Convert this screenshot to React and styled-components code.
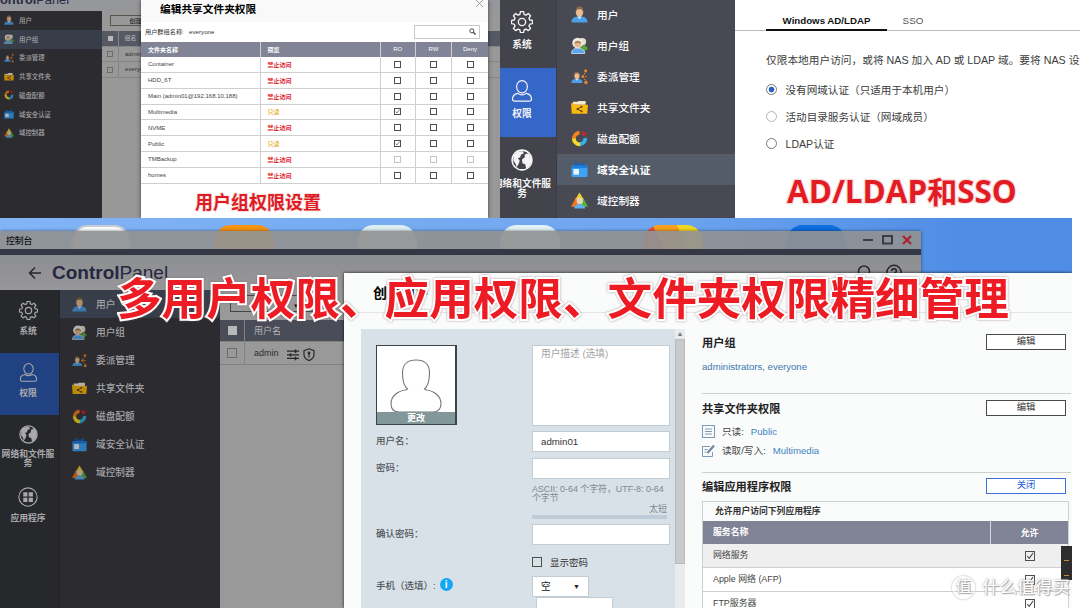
import React from 'react'
import styled, { createGlobalStyle, css } from 'styled-components'

const GlobalStyle = createGlobalStyle`
  *{
    box-sizing: border-box;
  }

  body{
    margin: 0;
    background: #fff;
    font-family: "Liberation Sans", "Noto Sans CJK SC", sans-serif;
  }
`

/* ---------- icons ---------- */

const Person = ({ x = 0, y = 0, s = 1 }) => (
  <g transform={`translate(${x} ${y}) scale(${s})`}>
    <path d="M.5 17.500c0-4 2.600-6 6.100-6.400h4.800c3.500.4 6.100 2.400 6.100 6.400z" fill="#4f9fe6" />
    <path d="M6.600 11l2.400 3.400 2.400-3.400z" fill="#d8ecfb" />
    <ellipse cx="9" cy="6.600" rx="3.900" ry="5" fill="#e9bd93" />
    <path d="M5 6.400C4.600 2.600 6.400.5 9 .5s4.400 2.100 4 5.900c-.8-2.400-2-3-4-3s-3.200.6-4 3z" fill="#8a6b4e" />
  </g>
)

const UserIcon = () => <svg viewBox="0 0 18 18"><Person /></svg>

const GroupIcon = () => (
  <svg viewBox="0 0 18 18">
    <circle cx="12" cy="5" r="4" fill="#e8dccb" />
    <path d="M10 12l4-4 4 4-4 4z" fill="#5aa83c" />
    <circle cx="7" cy="6.300" r="5.600" fill="#f1efe9" />
    <circle cx="7.200" cy="7.400" r="3.600" fill="#e6b78b" />
    <path d="M3.600 6.800C4 3.600 10.500 3.600 10.800 6.800 9 5.800 6 5.600 3.600 6.800z" fill="#8f7355" />
    <path d="M.5 17.500c0-4 3-5.500 6.600-5.500s7.400 1.500 7.400 5.500z" fill="#5aa6ea" stroke="#dcebf8" strokeWidth=".8" />
  </svg>
)

const DelegateIcon = () => (
  <svg viewBox="0 0 18 18">
    <Person x={0} y={3.500} s={0.7} />
    <path d="M12 9l4-5M12 9h4.500M12 9l4 5" stroke="#e8862a" strokeWidth="1.100" strokeDasharray="1.800 1" fill="none" />
    <circle cx="15.500" cy="3" r="1.600" fill="#e8862a" />
    <circle cx="12.500" cy="9" r="1.400" fill="#e8862a" />
    <circle cx="15.800" cy="15.300" r="1.800" fill="#e8862a" />
  </svg>
)

const FolderIcon = () => (
  <svg viewBox="0 0 18 18">
    <path d="M2 3h5l1-1h7.500v4H2z" fill="#f3ead0" />
    <path d="M0 4.500h2.500l1 1.500H18l-.8 9.500H.8z" fill="#fbb80f" />
    <path d="M11 8.200L7 10.700l4 2.400" stroke="#5b4308" strokeWidth="1" fill="none" />
    <circle cx="7" cy="10.700" r="1.200" fill="#5b4308" />
    <circle cx="11.200" cy="8.200" r="1.100" fill="#5b4308" />
    <circle cx="11.200" cy="13.100" r="1.100" fill="#5b4308" />
  </svg>
)

const QuotaIcon = () => (
  <svg viewBox="0 0 18 18" fill="none" strokeWidth="4">
    <path d="M9 3A6 6 0 0 0 3 9.500" stroke="#f5821f" />
    <path d="M3 9A6 6 0 0 0 10 15" stroke="#f6dc2b" />
    <path d="M9.500 15A6 6 0 0 0 15 8.500" stroke="#36b0e6" />
    <path d="M11 1.500l1.500 5 4.500-2c-1.500-2.500-4-3-6-3z" fill="#c9252d" />
  </svg>
)

const DomainIcon = () => (
  <svg viewBox="0 0 18 18">
    <path d="M4 .5l5 3.500 5-3.500v5H4z" fill="#1463b8" />
    <rect x=".5" y="5" width="17" height="12" rx="1" fill="#3ea2f5" />
    <path d="M.5 5h17v2.500H.5z" fill="#1c7fdc" />
    <rect x="2.600" y="8.500" width="5.800" height="6" fill="#eaf4fd" />
  </svg>
)

const ControllerIcon = () => (
  <svg viewBox="0 0 18 18">
    <path d="M5 6l5.200 9.500H0z" fill="#ee7421" />
    <path d="M13 6l5 9.500H8z" fill="#4fb436" />
    <path d="M9 .5l4.500 7.500h-9z" fill="#f6cf2a" />
    <circle cx="9.300" cy="9.500" r="3.400" fill="#ead2b6" />
    <path d="M3.500 17.500c0-3.500 2.500-4.500 5.700-4.500s5.700 1 5.700 4.500z" fill="#5fb0f0" />
  </svg>
)

const GearIcon = () => (
  <svg viewBox="0 0 24 24" fill="none" stroke="currentColor" strokeWidth="1.500" strokeLinejoin="round">
    <path d="M10.300 1.500h3.400l.6 3 2 .9 2.600-1.700 2.400 2.400-1.700 2.600.9 2 3 .6v3.400l-3 .6-.9 2 1.700 2.600-2.400 2.400-2.600-1.700-2 .9-.6 3h-3.400l-.6-3-2-.9-2.600 1.700-2.400-2.400 1.700-2.600-.9-2-3-.6v-3.400l3-.6.9-2-1.700-2.600 2.400-2.400 2.600 1.700 2-.9z" transform="translate(0 -.9)" />
    <circle cx="12" cy="12" r="4" />
  </svg>
)

const OutlineUser = () => (
  <svg viewBox="0 0 24 26" fill="none" stroke="currentColor" strokeWidth="1.400">
    <ellipse cx="12" cy="8" rx="6.400" ry="7.200" />
    <path d="M7 15.800C3 16.500.8 19 .8 22.500c0 1.500 1 2.500 2.600 2.500h17.200c1.600 0 2.600-1 2.600-2.500 0-3.500-2.200-6-6.200-6.700-3 2-7 2-10 0z" />
  </svg>
)

const GlobeIcon = () => (
  <svg viewBox="0 0 24 24">
    <circle cx="12" cy="12" r="10.800" fill="none" stroke="currentColor" strokeWidth="1.700" />
    <path d="M3 6.500C6 2.500 10 2 13 2.500l1 2.500-3 1-1 3-2.500 1 2 2.500-1 3.500-2.500 4-1-4-2.500-3.500z" fill="currentColor" />
    <path d="M15 6l4-1.500 3.500 5-.5 6-3 4-2.500 1.500-1-4.500-3-1-.5-4 3-2.500z" fill="currentColor" />
  </svg>
)

const AppsIcon = () => (
  <svg viewBox="0 0 24 24">
    <circle cx="12" cy="12" r="11" fill="none" stroke="currentColor" strokeWidth="1.300" />
    <path d="M6.300 6.300h5v5h-5zM12.900 6.300h5v5h-5zM6.300 12.900h5v5h-5zM12.900 12.900h5v5h-5z" fill="currentColor" />
  </svg>
)

const Magnifier = ({ size = 8 }) => (
  <svg width={size} height={size} viewBox="0 0 16 16" fill="none" stroke="#333" strokeWidth="2">
    <circle cx="6.500" cy="6.500" r="4.700" />
    <path d="M10 10l5 5" strokeWidth="3" />
  </svg>
)

/* ---------- data ---------- */

const menu = [
  { label: '用户', icon: <UserIcon /> },
  { label: '用户组', icon: <GroupIcon /> },
  { label: '委派管理', icon: <DelegateIcon /> },
  { label: '共享文件夹', icon: <FolderIcon /> },
  { label: '磁盘配额', icon: <QuotaIcon /> },
  { label: '域安全认证', icon: <DomainIcon /> },
  { label: '域控制器', icon: <ControllerIcon /> },
]

const folders = [
  { name: 'Container' },
  { name: 'HDD_6T' },
  { name: 'Main (admin01@192.168.10.188)' },
  { name: 'Multimedia', ro: true },
  { name: 'NVME' },
  { name: 'Public', ro: true },
  { name: 'TMBackup', disabled: true },
  { name: 'homes' },
]

const shortcuts = [
  { bg: 'linear-gradient(#fff, #e4e4e4)', ring: '#c9ccd2' },
  { bg: '#f7940f' },
  { bg: '#dff0f4' },
  { bg: '#e2f2f6' },
  { bg: 'linear-gradient(65deg, #e2574c 0 42%, #f8a01c 42% 70%, #f2d71f 70%)' },
  { bg: '#0e6fe0' },
]

const Menu = ({ active, kind }) => (
  <MenuList $kind={kind}>
    {menu.map((m, i) => (
      <MenuItem key={m.label} $kind={kind} $active={i === active}>
        {m.icon}
        <span>{m.label}</span>
      </MenuItem>
    ))}
  </MenuList>
)

const Check = ({ on, faint, size }) => (
  <Box $faint={faint} $size={size}>
    {on && (
      <svg viewBox="0 0 10 10" fill="none" stroke="#444" strokeWidth="1.300">
        <path d="M1.500 5l2.500 3L9 1" />
      </svg>
    )}
  </Box>
)

const GroupShot = () => (
  <GroupPane>
    <SmallHeader><b>ontrol</b>Panel</SmallHeader>
    <SmallBody>
      <Menu kind="small" active={1} />
      <SmallContent>
        <SmallButton>创建</SmallButton>
        <SmallRow $head><Box $size={5} $fill /><span>组名</span></SmallRow>
        <SmallRow><Box $size={6} $dim /><span>admin</span></SmallRow>
        <SmallRow><Box $size={6} $dim /><span>everyone</span></SmallRow>
      </SmallContent>
    </SmallBody>
    <ShareDialog>
      <ShareTitle>
        编辑共享文件夹权限
        <svg width="7" height="7" viewBox="0 0 8 8" stroke="#999" strokeWidth="1"><path d="M0 0l8 8M8 0L0 8" /></svg>
      </ShareTitle>
      <ShareFilter>
        <span>用户群组名称:&nbsp;&nbsp; everyone</span>
        <ShareSearch><Magnifier size={7} /></ShareSearch>
      </ShareFilter>
      <ShareRow $head>
        <span>文件夹名称</span><span>预览</span><i>RO</i><i>RW</i><i>Deny</i>
      </ShareRow>
      {folders.map(f => (
        <ShareRow key={f.name}>
          <span>{f.name}</span>
          <Access $ro={f.ro}>{f.ro ? '只读' : '禁止访问'}</Access>
          <i><Check on={f.ro} faint={f.disabled} size={7} /></i>
          <i><Check faint={f.disabled} size={7} /></i>
          <i><Check faint={f.disabled} size={7} /></i>
        </ShareRow>
      ))}
      <ShareCaption>用户组权限设置</ShareCaption>
    </ShareDialog>
  </GroupPane>
)

const DomainShot = () => (
  <DomainPane>
    <Rail>
      <RailItem $h={68} $pt={11} $icon={22}><GearIcon />系统</RailItem>
      <RailItem $h={69} $pt={12} $icon={22} $active><OutlineUser />权限</RailItem>
      <RailItem $h={81} $pt={11.500} $icon={22}><GlobeIcon /><p>网络和文件服<br />务</p></RailItem>
    </Rail>
    <Menu kind="large" active={5} />
  </DomainPane>
)

const LdapShot = () => (
  <LdapPane>
    <Tabs>
      <Tab $active>Windows AD/LDAP</Tab>
      <Tab>SSO</Tab>
    </Tabs>
    <Intro>仅限本地用户访问，或将 NAS 加入 AD 或 LDAP 域。要将 NAS 设置</Intro>
    <Option><Radio $on />没有网域认证（只适用于本机用户）</Option>
    <Option><Radio $light />活动目录服务认证（网域成员）</Option>
    <Option><Radio />LDAP认证</Option>
    <LdapCaption>AD/LDAP<em>和</em>SSO</LdapCaption>
  </LdapPane>
)

const ControlWindow = () => (
  <Window>
    <TitleBar>
      控制台
      <svg width="50" height="12" viewBox="0 0 50 12" fill="none" stroke="#3b3d41" strokeWidth="2">
        <path d="M1 6h10" />
        <rect x="21" y="2" width="9" height="7.500" />
        <path d="M41 2l8 8M49 2l-8 8" stroke="#a8232b" strokeWidth="2.200" />
      </svg>
    </TitleBar>
    <WindowHeader>
      <svg width="14" height="12" viewBox="0 0 14 12" fill="none" stroke="#26282e" strokeWidth="1.500"><path d="M13 6H1.500M7 .5L1.500 6 7 11.500" /></svg>
      <h2><b>Control</b>Panel</h2>
      <svg width="48" height="18" viewBox="0 0 48 18" fill="none" stroke="#26282e" strokeWidth="1.500">
        <circle cx="8" cy="7.500" r="5.500" />
        <path d="M12 12l4 4" />
        <circle cx="38" cy="8.500" r="7.200" />
        <path d="M35.700 7c0-3 4.700-3 4.700 0 0 1.600-2.300 1.600-2.300 3.600M38.100 12v1.300" />
      </svg>
    </WindowHeader>
    <WindowBody>
      <Rail $dim>
        <RailItem $h={62.500} $pt={11} $icon={19} $dim><GearIcon />系统</RailItem>
        <RailItem $h={62} $pt={10} $icon={19} $dim $active><OutlineUser />权限</RailItem>
        <RailItem $h={62} $pt={10} $icon={19} $dim><GlobeIcon /><p>网络和文件服<br />务</p></RailItem>
        <RailItem $h={62} $pt={10} $icon={20} $dim><AppsIcon />应用程序</RailItem>
      </Rail>
      <Menu kind="dim" active={0} />
      <UserList>
        <UserButton><small>▼</small></UserButton>
        <UserRow $head><Box $size={9} $fill /><span>用户名</span></UserRow>
        <UserRow>
          <Box $size={10} $dim />
          <span>admin</span>
          <svg width="28" height="13" viewBox="0 0 28 13" fill="none" stroke="#26272b" strokeWidth="1.200">
            <path d="M0 3.200h12M0 6.800h12M0 10.400h12" />
            <path d="M8.500 1.500v3.400M3.500 5.200v3.200M8.500 8.800v3.400" strokeWidth="1.500" />
            <path d="M22 .8l5 1.800v4c0 3-2.500 5-5 6-2.500-1-5-3-5-6v-4zM22 9.500V5" />
            <circle cx="22" cy="5" r=".8" />
          </svg>
        </UserRow>
      </UserList>
    </WindowBody>
  </Window>
)

const UserForm = () => (
  <FormPanel>
    <FormGrid>
      <Avatar>
        <svg width="52" height="54" viewBox="0 0 52 54" fill="#fff" stroke="#777" strokeWidth="1.100">
          <path d="M17.500 30C13 26 12.500 20 12.500 14 12.500 5 18 1 26 1s13.500 4 13.500 13c0 6-.5 12-5 16l1 .8C45 32 51 37.500 51 44.500c0 6-3 8.500-8 8.500H9c-5 0-8-2.500-8-8.500 0-7 6-12.500 15.500-13.700z" />
        </svg>
        <AvatarLabel>更改</AvatarLabel>
      </Avatar>
      <Field $h={81} $hint>用户描述 (选填)</Field>
      <Label>用户名：</Label>
      <Field $h={21}>admin01</Field>
      <Label>密码：</Label>
      <div>
        <Field $h={21} />
        <Hint>ASCII: 0-64 个字符，UTF-8: 0-64<br />个字节</Hint>
        <Strength>太短</Strength>
      </div>
      <Label>确认密码：</Label>
      <Field $h={21} />
      <span />
      <ShowPassword><Box $size={10} />显示密码</ShowPassword>
      <Label>手机（选填）: <Info>i</Info></Label>
      <div>
        <Select>空<small>▼</small></Select>
        <PhoneInput />
      </div>
    </FormGrid>
    <Scroll><small>▲</small><div /></Scroll>
  </FormPanel>
)

const Permissions = () => (
  <PermissionColumn>
    <Section $h={65}>
      <SectionTitle>用户组<EditButton>编辑</EditButton></SectionTitle>
      <GroupLinks>administrators, everyone</GroupLinks>
    </Section>
    <Section $h={78}>
      <SectionTitle>共享文件夹权限<EditButton>编辑</EditButton></SectionTitle>
      <FolderLines>
        <FolderLine>
          <svg width="13" height="13" viewBox="0 0 13 13" fill="none" stroke="#7d9bb5">
            <rect x=".5" y=".5" width="12" height="12" />
            <path d="M3 4h7M3 6.500h7M3 9h7" />
          </svg>
          只读: <a>Public</a>
        </FolderLine>
        <FolderLine>
          <svg width="13" height="13" viewBox="0 0 13 13" fill="none" stroke="#7d9bb5">
            <path d="M8 2.500H.5v10h10V8M2.500 5.500h3M2.500 8h2" />
            <path d="M5.500 9L12 1.500" strokeWidth="2.200" stroke="#71879b" />
          </svg>
          读取/写入: <a>Multimedia</a>
        </FolderLine>
      </FolderLines>
    </Section>
    <Section>
      <SectionTitle>编辑应用程序权限<EditButton $blue>关闭</EditButton></SectionTitle>
      <AppTable>
        <AppNote>允许用户访问下列应用程序</AppNote>
        <AppRow $head><span>服务名称</span><i>允许</i></AppRow>
        <AppRow $gray><span>网络服务</span><i><Check on size={10} /></i></AppRow>
        <AppRow><span>Apple 网络 (AFP)</span><i><Check on size={10} /></i></AppRow>
        <AppRow><span>FTP服务器</span><i><Check on size={10} /></i></AppRow>
      </AppTable>
    </Section>
  </PermissionColumn>
)

const App = () => (
  <Board>
    <GlobalStyle />
    <TopRow>
      <GroupShot />
      <DomainShot />
      <LdapShot />
    </TopRow>
    <Desktop>
      <Shortcuts>
        {shortcuts.map(s => <Shortcut key={s.bg} $bg={s.bg} $ring={s.ring} />)}
      </Shortcuts>
      <ControlWindow />
      <CreateDialog>
        <CreateTitle>创建用户</CreateTitle>
        <CreateBody>
          <UserForm />
          <Permissions />
        </CreateBody>
      </CreateDialog>
      <Monitor><hr /><hr /></Monitor>
    </Desktop>
    <Headline>多用户权限、应用权限、文件夹权限精细管理</Headline>
    <Watermark><span>值</span>什么值得买</Watermark>
  </Board>
)

export default App

/* ---------- shared ---------- */

const Board = styled.div`
  width: 1080px;
  height: 608px;
  position: relative;
  overflow: hidden;
  background: #fff;
`

const TopRow = styled.div`
  display: flex;
  height: 218px;
`

const Box = styled.div`
  width: ${p => p.$size}px;
  height: ${p => p.$size}px;
  flex: none;
  display: grid;
  border: 1px solid ${p => (p.$faint ? '#c4c4c4' : p.$dim ? '#6c6c6c' : '#4e4e4e')};
  ${p => p.$fill && css`
    background: #b9b9b9;
    border-color: #b9b9b9;
  `}
`

const kinds = {
  small: { w: 101.5, row: 18.75, pad: 3.5, icon: 10, gap: 5.5, font: 6.4, top: 0 },
  large: { w: 178, row: 31.1, pad: 14, icon: 17, gap: 9, font: 10.7, top: -1.5 },
  dim: { w: 160, row: 28, pad: 12, icon: 15, gap: 9, font: 9.7, top: 0 },
}

const MenuList = styled.nav`
  width: ${p => kinds[p.$kind].w}px;
  padding-bottom: 10px;
  margin-top: ${p => kinds[p.$kind].top}px;
  flex: none;
  background: ${p => (p.$kind === 'large' ? '#484953' : '#2c2b30')};
`

const MenuItem = styled.div`
  height: ${p => kinds[p.$kind].row}px;
  padding-left: ${p => kinds[p.$kind].pad}px;
  gap: ${p => kinds[p.$kind].gap}px;
  font-size: ${p => kinds[p.$kind].font}px;
  display: flex;
  align-items: center;
  font-weight: 500;
  color: ${p => (p.$kind === 'large' ? '#fff' : '#a4a4a7')};
  ${p => p.$active && css`
    background: ${p.$kind === 'large' ? '#545b69' : '#373e49'};
    font-weight: ${p.$kind === 'large' ? 700 : 500};
  `}

  svg{
    width: ${p => kinds[p.$kind].icon}px;
    height: ${p => kinds[p.$kind].icon}px;
    filter: ${p => (p.$kind === 'large' ? 'none' : 'brightness(0.75)')};
  }
`

const outline = css`
  color: #ed1c24;
  font-family: "Noto Sans CJK SC", sans-serif;
  font-weight: 700;
  white-space: nowrap;
  paint-order: stroke fill;
`

/* ---------- user group permission ---------- */

const GroupPane = styled.section`
  width: 500px;
  position: relative;
  overflow: hidden;
  background: #989898;
  display: flex;
  flex-direction: column;
`

const SmallHeader = styled.div`
  height: 16px;
  flex: none;
  margin-top: -5px;
  background: #96979b;
  color: #2a2b45;
  font-size: 12.800px;
  line-height: 10px;
`

const SmallBody = styled.div`
  display: flex;
  flex: 1;
`

const SmallContent = styled.div`
  flex: 1;
  padding-top: 4px;
`

const SmallButton = styled.div`
  width: 70px;
  height: 11px;
  margin: 0 0 5px 8px;
  border: 1px solid #555;
  padding-left: 19px;
  font-size: 6.200px;
  line-height: 9px;
`

const SmallRow = styled.div`
  display: flex;
  align-items: center;
  height: 15.700px;
  padding-left: ${p => (p.$head ? 6 : 5.5)}px;
  gap: 5px;
  font-size: 6px;
  color: ${p => (p.$head ? '#b8b8bc' : '#333')};
  background: ${p => (p.$head ? '#565964' : 'transparent')};
  border-bottom: 1px solid #858585;

  span{
    line-height: 14.700px;
    padding-left: 6px;
    border-left: 1px solid #858585;
  }
`

const ShareDialog = styled.div`
  position: absolute;
  left: 141px;
  top: 0;
  width: 347px;
  height: 218px;
  background: #fff;
  box-shadow: 0 0 4px rgba(0 ,0 ,0 , 0.6);
`

const ShareTitle = styled.h3`
  margin: 0;
  height: 22px;
  padding: 0 5px 5px 19px;
  display: flex;
  justify-content: space-between;
  align-items: center;
  font-size: 10.700px;
  background: #f9f9f9;

  svg{
    margin-bottom: 11px;
  }
`

const ShareFilter = styled.div`
  height: 19.500px;
  padding: 0 8px 0 4px;
  display: flex;
  align-items: center;
  justify-content: space-between;
  font-size: 6.200px;
  color: #333;
`

const ShareSearch = styled.div`
  width: 66px;
  height: 14px;
  border: 1px solid #c9c9c9;
  display: flex;
  justify-content: flex-end;
  align-items: center;
  padding-right: 3px;
`

const ShareRow = styled.div`
  display: grid;
  grid-template-columns: 119.500px 120px 35.500px 36px 36px;
  height: ${p => (p.$head ? 15.5 : 15.85)}px;
  background: ${p => (p.$head ? '#808496' : '#fff')};
  border-bottom: ${p => (p.$head ? 'none' : '1px solid #cfcfcf')};
  color: ${p => (p.$head ? '#fff' : '#444')};
  font-size: 6px;
  font-weight: ${p => (p.$head ? 700 : 400)};

  > *{
    display: flex;
    align-items: center;
    padding-left: 7px;
    font-style: normal;
    border-right: 1px solid #cfcfcf;
  }

  > i{
    justify-content: center;
    padding: 0;
    font-weight: 400;
  }

  > *:last-child{
    border-right: none;
  }
`

const Access = styled.span`
  color: ${p => (p.$ro ? '#e6a817' : '#e0202b')};
  font-weight: ${p => (p.$ro ? 500 : 700)};
`

const ShareCaption = styled.div`
  ${outline}
  padding-left: 54px;
  font-size: 18px;
  line-height: 26px;
  margin-top: 4px;
  color: #dd1c24;
  -webkit-text-stroke: 1.500px #f8dede;
`

/* ---------- domain security menu ---------- */

const DomainPane = styled.section`
  width: 235px;
  display: flex;
  overflow: hidden;
  background: #484953;
`

const Rail = styled.div`
  width: ${p => (p.$dim ? 60 : 57)}px;
  flex: none;
  overflow: hidden;
  background: ${p => (p.$dim ? '#26282b' : '#42434b')};
  border-right: 1px solid ${p => (p.$dim ? '#222326' : '#3b3c44')};
`

const RailItem = styled.div`
  height: ${p => p.$h}px;
  padding-top: ${p => p.$pt}px;
  padding-right: ${p => (p.$dim ? 4 : 13)}px;
  margin-right: -1px;
  display: flex;
  flex-direction: column;
  align-items: center;
  font-size: ${p => (p.$dim ? 8.8 : 9.7)}px;
  line-height: 12px;
  font-weight: 700;
  text-align: center;
  color: ${p => (p.$dim ? '#a9a9ab' : '#f4f4f4')};
  background: ${p => (p.$active ? (p.$dim ? '#214282' : '#3567c9') : 'none')};

  svg{
    width: ${p => p.$icon}px;
    height: ${p => p.$icon}px;
    margin-bottom: ${p => (p.$dim ? 5 : 5.5)}px;
    flex: none;
  }

  p{
    margin: ${p => (p.$dim ? '1px 0 0' : '2.500px 0 0')};
    white-space: nowrap;
    line-height: ${p => (p.$dim ? 9.5 : 10.7)}px;
  }
`

/* ---------- LDAP ---------- */

const LdapPane = styled.section`
  width: 345px;
  overflow: hidden;
  background: #fff;
  color: #3c3c3c;
`

const Tabs = styled.div`
  display: flex;
  height: 31px;
  padding-left: 31px;
  border-bottom: 1px solid #bdbdbd;
`

const Tab = styled.div`
  height: 31px;
  width: ${p => (p.$active ? 121 : 52)}px;
  padding-top: 12px;
  line-height: 18px;
  text-align: center;
  font-size: ${p => (p.$active ? 9.7 : 9.9)}px;
  font-weight: ${p => (p.$active ? 700 : 400)};
  color: ${p => (p.$active ? '#111' : '#555')};
  border-bottom: ${p => (p.$active ? '2px solid #111' : 'none')};
`

const Intro = styled.p`
  margin: 18.500px 0 6px 31px;
  font-size: 10.700px;
  line-height: 20px;
  white-space: nowrap;
`

const Option = styled.div`
  display: flex;
  align-items: center;
  gap: 8.500px;
  height: 27.300px;
  padding-left: 31px;
  font-size: 10.600px;
`

const Radio = styled.span`
  width: 11px;
  height: 11px;
  border-radius: 50%;
  border: 1px solid ${p => (p.$light ? '#b5b5b5' : '#777')};
  background: ${p => (p.$on ? 'radial-gradient(#2b60c4 0 2.500px, #fff 3.200px)' : '#fff')};
`

const LdapCaption = styled.div`
  ${outline}
  padding-left: 52px;
  margin-top: 14px;
  font-family: "Open Sans", "Noto Sans CJK SC", sans-serif;
  font-size: 31.400px;
  line-height: 40px;
  color: #e31c24;
  -webkit-text-stroke: 2.500px #f8dede;

  em{
    font-style: normal;
    font-size: 30px;
  }
`

/* ---------- desktop ---------- */

const Desktop = styled.section`
  width: 1072px;
  height: 390px;
  position: relative;
  overflow: hidden;
  background: linear-gradient(90deg, #82b4f6, #6fa6ef 60%, #4f8de5 90%);
`

const Shortcuts = styled.div`
  display: flex;
  gap: 83.500px;
  padding: 7px 0 0 71px;
`

const Shortcut = styled.div`
  width: 59.500px;
  height: 58px;
  border-radius: 17px;
  background: ${p => p.$bg};
  border: ${p => (p.$ring ? `2px solid ${p.$ring}` : 'none')};
`

const Window = styled.div`
  position: absolute;
  left: 0;
  top: 13px;
  width: 921px;
  height: 377px;
  display: flex;
  flex-direction: column;
  box-shadow: 0 0 3px rgba(0 ,0 ,0 , 0.5);
`

const TitleBar = styled.div`
  height: 18px;
  flex: none;
  padding: 0 9px 0 6px;
  display: flex;
  align-items: center;
  justify-content: space-between;
  font-size: 8.800px;
  font-weight: 500;
  color: #111;
  background: rgba(144 ,145 ,146 , 0.92);
`

const WindowHeader = styled.div`
  height: 41px;
  flex: none;
  border-top: 6px solid #343844;
  background: linear-gradient(#8d8e91, #97979a);
  display: flex;
  align-items: center;
  padding: 0 17px 0 28px;

  h2{
    flex: 1;
    margin: 0 0 0 10px;
    font-size: 19px;
    font-weight: 400;
    color: #252640;
  }
`

const WindowBody = styled.div`
  flex: 1;
  display: flex;
`

const UserList = styled.div`
  flex: 1;
  background: #999;
  padding-top: 5px;
`

const UserButton = styled.div`
  width: 92px;
  height: 17px;
  margin: 0 0 8px 10px;
  padding-right: 22px;
  border: 1px solid #444;
  text-align: right;
  line-height: 13px;

  small{
    font-size: 6px;
  }
`

const UserRow = styled.div`
  height: ${p => (p.$head ? 22 : 23)}px;
  display: flex;
  align-items: center;
  padding-left: ${p => (p.$head ? 8 : 7)}px;
  font-size: 9px;
  color: ${p => (p.$head ? '#b4b4b8' : '#2c2c2c')};
  background: ${p => (p.$head ? '#4a4c58' : 'transparent')};
  border-bottom: 1px solid #828282;

  span{
    margin-left: 7px;
    padding-left: 9px;
    line-height: 22px;
    border-left: 1px solid #828282;
  }

  svg{
    margin: 3px 0 0 8px;
  }
`

/* ---------- create user dialog ---------- */

const CreateDialog = styled.div`
  position: absolute;
  left: 344px;
  top: 55px;
  width: 728px;
  height: 335px;
  background: #fafbfb;
  box-shadow: 0 0 3px rgba(0 ,0 ,0 , 0.8);
`

const CreateTitle = styled.h3`
  margin: 0;
  height: 40px;
  padding-left: 29px;
  font-size: 14px;
  line-height: 41px;
  border-bottom: 1px solid #e6e6e6;
`

const CreateBody = styled.div`
  display: flex;
  padding: 16px 1px 0 17px;
`

const FormPanel = styled.div`
  width: 324px;
  height: 280px;
  display: flex;
  justify-content: space-between;
  background: #d9e1e8;
`

const FormGrid = styled.div`
  display: grid;
  grid-template-columns: 156px 138px;
  grid-template-rows: 81px 21px 61px 21px 20px 40px;
  row-gap: 5.400px;
  padding: 16px 0 0 15px;
`

const Avatar = styled.div`
  width: 81px;
  height: 80px;
  border: 1px solid #3c4448;
  border-right-width: 2px;
  background: #fff;
  display: flex;
  flex-direction: column;
  align-items: center;
  justify-content: space-between;
  padding-top: 13px;

  svg{
    flex: none;
    margin-bottom: -1px;
  }
`

const AvatarLabel = styled.div`
  width: 100%;
  height: 12px;
  flex: none;
  background: #829799;
  color: #fff;
  font-size: 9px;
  line-height: 12px;
  font-weight: 700;
  text-align: center;
`

const Field = styled.div`
  width: 138px;
  height: ${p => p.$h}px;
  border: 1px solid #c2ccd3;
  background: #fff;
  padding: 0 8px;
  font-size: 9.700px;
  line-height: ${p => (p.$hint ? 15 : 20)}px;
  color: ${p => (p.$hint ? '#a3a3a3' : '#333')};
`

const Label = styled.div`
  display: flex;
  align-items: center;
  gap: 4px;
  height: 18px;
  font-size: 9.500px;
  font-weight: 500;
  color: #4e565c;
`

const Hint = styled.div`
  margin-top: 6px;
  font-size: 8.900px;
  line-height: 9.500px;
  color: #80878c;
  white-space: nowrap;
`

const Strength = styled.div`
  width: 135px;
  height: 15px;
  border-bottom: 4px solid #bdccd7;
  text-align: right;
  font-size: 9px;
  line-height: 11px;
  color: #80878c;
`

const ShowPassword = styled.div`
  display: flex;
  align-items: center;
  gap: 8px;
  padding-top: 2px;
  font-size: 9.500px;
  color: #333;
`

const Info = styled.b`
  width: 13px;
  height: 13px;
  border-radius: 50%;
  background: #14a9f5;
  color: #fff;
  font-size: 10px;
  line-height: 13px;
  text-align: center;
`

const Select = styled.div`
  width: 57px;
  height: 21px;
  border: 1px solid #c2ccd3;
  background: #fff;
  display: flex;
  justify-content: space-between;
  align-items: center;
  padding: 0 8px;
  font-size: 9.700px;
  color: #222;

  small{
    font-size: 7px;
  }
`

const PhoneInput = styled.div`
  width: 77px;
  height: 21px;
  margin-left: 4px;
  border: 1px solid #c2ccd3;
  background: #fff;
`

const Scroll = styled.div`
  width: 10px;
  background: #eaebeb;
  text-align: center;
  color: #777;

  small{
    display: block;
    font-size: 7px;
    line-height: 10px;
  }

  div{
    height: 225px;
    background: #c9cbcb;
    border: 1px solid #bbb;
  }
`

const PermissionColumn = styled.div`
  flex: 1;
  padding: 5px 0 0 17px;
`

const Section = styled.div`
  height: ${p => (p.$h ? `${p.$h - 5}px` : 'auto')};
  margin-bottom: 5.500px;
  border-bottom: ${p => (p.$h ? '1px solid #cfcfcf' : 'none')};
`

const SectionTitle = styled.h4`
  margin: 0;
  height: 16px;
  display: flex;
  justify-content: space-between;
  align-items: center;
  padding-right: 5px;
  font-size: 11.200px;
  color: #222;
`

const EditButton = styled.div`
  width: 80px;
  height: 16px;
  border: 1px solid ${p => (p.$blue ? '#3b6fdc' : '#4a4a4a')};
  background: #fff;
  color: ${p => (p.$blue ? '#2459d6' : '#333')};
  font-size: 9.300px;
  line-height: 13px;
  font-weight: 400;
  text-align: center;
`

const GroupLinks = styled.div`
  margin-top: 11px;
  font-size: 9.600px;
  line-height: 12px;
  color: #3a7ab0;
`

const FolderLines = styled.div`
  padding-top: 6px;
`

const FolderLine = styled.div`
  display: flex;
  align-items: center;
  height: 19px;
  gap: 7px;
  font-size: 9.600px;
  color: #444;

  a{
    color: #3b86bf;
  }
`

const AppTable = styled.div`
  width: 367px;
  margin-top: 7px;
  border: 1px solid #cfcfcf;
`

const AppNote = styled.div`
  height: 19px;
  padding-left: 12px;
  font-size: 8.800px;
  line-height: 18px;
  font-weight: 700;
  color: #333;
`

const AppRow = styled.div`
  height: ${p => (p.$head ? 23 : 24)}px;
  display: grid;
  grid-template-columns: 288px 1fr;
  align-items: center;
  font-size: 8.900px;
  font-weight: ${p => (p.$head ? 700 : 400)};
  color: ${p => (p.$head ? '#fff' : '#444')};
  background: ${p => (p.$head ? '#7f8395' : p.$gray ? '#efefef' : '#fff')};
  border-bottom: ${p => (p.$head ? 'none' : '1px solid #cfcfcf')};

  span{
    padding-left: 10px;
    line-height: 23px;
    border-right: ${p => (p.$head ? '1px solid #d5d7dd' : 'none')};
  }

  i{
    font-style: normal;
    justify-self: center;
  }
`

/* small system monitor docked at the screen edge */
const Monitor = styled.div`
  position: absolute;
  right: 0;
  top: 328px;
  width: 11px;
  height: 34px;
  background: #2d2d2d;
  padding: 14px 3px 0;

  hr{
    margin: 0 0 14px;
    border: none;
    border-top: 1px solid #d08428;
  }
`

const Headline = styled.h1`
  ${outline}
  position: absolute;
  left: 117px;
  top: 264px;
  margin: 0;
  font-size: 44.600px;
  line-height: 64px;
  -webkit-text-stroke: 4px #fff;
  filter: drop-shadow(0 0 1px rgba(120 ,90 ,90 , 0.6));
`

const Watermark = styled.div`
  position: absolute;
  left: 952px;
  top: 575px;
  display: flex;
  align-items: center;
  gap: 7px;
  font-size: 17.600px;
  line-height: 24px;
  white-space: nowrap;
  color: #fff;
  text-shadow: 0 0 2px #999, 1px 1px 1px #aaa;

  span{
    width: 23px;
    height: 23px;
    border-radius: 50%;
    border: 1px solid #fff;
    box-shadow: 0 0 2px #999;
    text-align: center;
    line-height: 20px;
    font-size: 16px;
  }
`
